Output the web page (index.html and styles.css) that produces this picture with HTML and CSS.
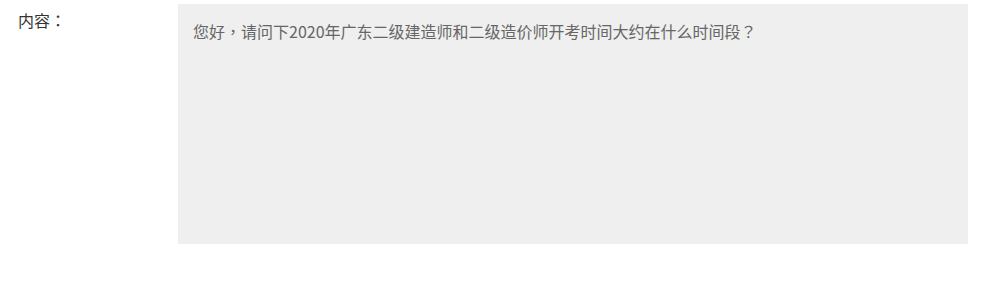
FILE: index.html
```html
<!DOCTYPE html>
<html lang="zh-CN">
<head>
<meta charset="utf-8">
<link rel="stylesheet" href="styles.css">
</head>
<body>
<div class="row">
  <div class="label">内容<span class="punct" lang="zh-TW">：</span></div>
  <div class="content">您好<span class="punct" lang="zh-TW">，</span>请问下2020年广东二级建造师和二级造价师开考时间大约在什么时间段<span class="punct" lang="zh-TW">？</span></div>
</div>
</body>
</html>
```
FILE: styles.css
```css
html, body {
  margin: 0;
  padding: 0;
  background: #fff;
}
body {
  font-family: "Noto Sans CJK SC", "Noto Sans", sans-serif;
  font-size: 16px;
}
.row {
  display: flex;
  padding-top: 4px;
}
.label {
  width: 178px;
  box-sizing: border-box;
  padding-left: 18px;
  line-height: 32px;
  color: #333;
}
.content {
  width: 790px;
  height: 240px;
  box-sizing: border-box;
  padding: 15px;
  background: #efefef;
  color: #666;
  line-height: 24px;
}
.punct {
  font-family: "Noto Sans CJK TC", sans-serif;
}
```
